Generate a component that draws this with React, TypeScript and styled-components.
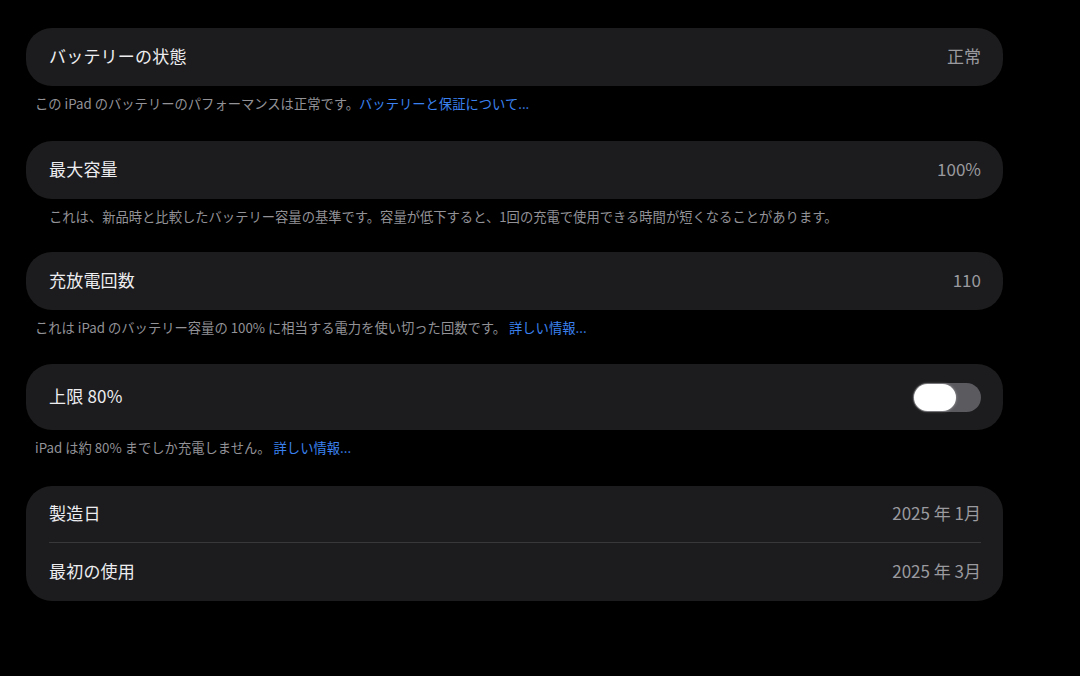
import React from "react";
import styled, { createGlobalStyle } from "styled-components";

const GlobalStyle = createGlobalStyle`
  html, body {
    margin: 0;
    padding: 0;
    background: #000;
  }
  body {
    font-family: "Noto Sans CJK JP", "Noto Sans", "Liberation Sans", sans-serif;
    -webkit-font-smoothing: antialiased;
  }
`;

const Page = styled.div`
  width: 1080px;
  height: 676px;
  background: #000;
  padding: 28px 0 0 26px;
  box-sizing: border-box;
  overflow: hidden;
`;

const Column = styled.div`
  width: 977px;
  display: flex;
  flex-direction: column;
`;

const Group = styled.div`
  background: #1c1c1e;
  border-radius: 26px;
  display: flex;
  flex-direction: column;
  padding: 0 22px 0 23px;
`;

const Row = styled.div<{ $h: number; $divider?: boolean }>`
  height: ${(p) => p.$h}px;
  display: flex;
  align-items: center;
  justify-content: space-between;
  box-sizing: border-box;
  padding-bottom: 3px;
  border-bottom: ${(p) => (p.$divider ? "1px solid #38383b" : "none")};
`;

const Label = styled.span`
  color: #ededf0;
  font-size: 17px;
  font-weight: 400;
  letter-spacing: 0.2px;
`;

const Value = styled.span`
  color: #9a9a9f;
  font-size: 17px;
`;

const Footer = styled.p<{ $indent?: boolean; $gap?: number }>`
  margin: 0;
  padding: 9px 0 ${(p) => p.$gap ?? 27}px ${(p) => (p.$indent ? "23px" : "9px")};
  color: #929297;
  font-size: 13.3px;
  line-height: 18px;
  white-space: nowrap;
`;

const Link = styled.span`
  color: #3b82f0;
`;

const Track = styled.div<{ $on?: boolean }>`
  width: 68px;
  height: 29px;
  margin-top: 4px;
  border-radius: 15px;
  background: ${(p) => (p.$on ? "#30d158" : "#5a5a5f")};
  display: flex;
  align-items: center;
  justify-content: ${(p) => (p.$on ? "flex-end" : "flex-start")};
  padding: 1px;
  box-sizing: border-box;
`;

const Knob = styled.div`
  width: 42px;
  height: 27px;
  border-radius: 14px;
  background: #fff;
  box-shadow: 0 0 3px rgba(255, 255, 255, 0.5);
`;

const Toggle = ({ on }: { on?: boolean }) => (
  <Track $on={on}>
    <Knob />
  </Track>
);

export default function App() {
  return (
    <>
      <GlobalStyle />
      <Page>
        <Column>
          <Group>
            <Row $h={58}>
              <Label>バッテリーの状態</Label>
              <Value>正常</Value>
            </Row>
          </Group>
          <Footer $gap={28}>
            この iPad のバッテリーのパフォーマンスは正常です。<Link>バッテリーと保証について...</Link>
          </Footer>

          <Group>
            <Row $h={58}>
              <Label>最大容量</Label>
              <Value>100%</Value>
            </Row>
          </Group>
          <Footer $indent $gap={26}>
            これは、新品時と比較したバッテリー容量の基準です。容量が低下すると、1回の充電で使用できる時間が短くなることがあります。
          </Footer>

          <Group>
            <Row $h={58}>
              <Label>充放電回数</Label>
              <Value>110</Value>
            </Row>
          </Group>
          <Footer>
            これは iPad のバッテリー容量の 100% に相当する電力を使い切った回数です。 <Link>詳しい情報...</Link>
          </Footer>

          <Group>
            <Row $h={66}>
              <Label>上限 80%</Label>
              <Toggle />
            </Row>
          </Group>
          <Footer $gap={29}>
            iPad は約 80% までしか充電しません。 <Link>詳しい情報...</Link>
          </Footer>

          <Group>
            <Row $h={57} $divider>
              <Label>製造日</Label>
              <Value>2025 年 1月</Value>
            </Row>
            <Row $h={58}>
              <Label>最初の使用</Label>
              <Value>2025 年 3月</Value>
            </Row>
          </Group>
        </Column>
      </Page>
    </>
  );
}
